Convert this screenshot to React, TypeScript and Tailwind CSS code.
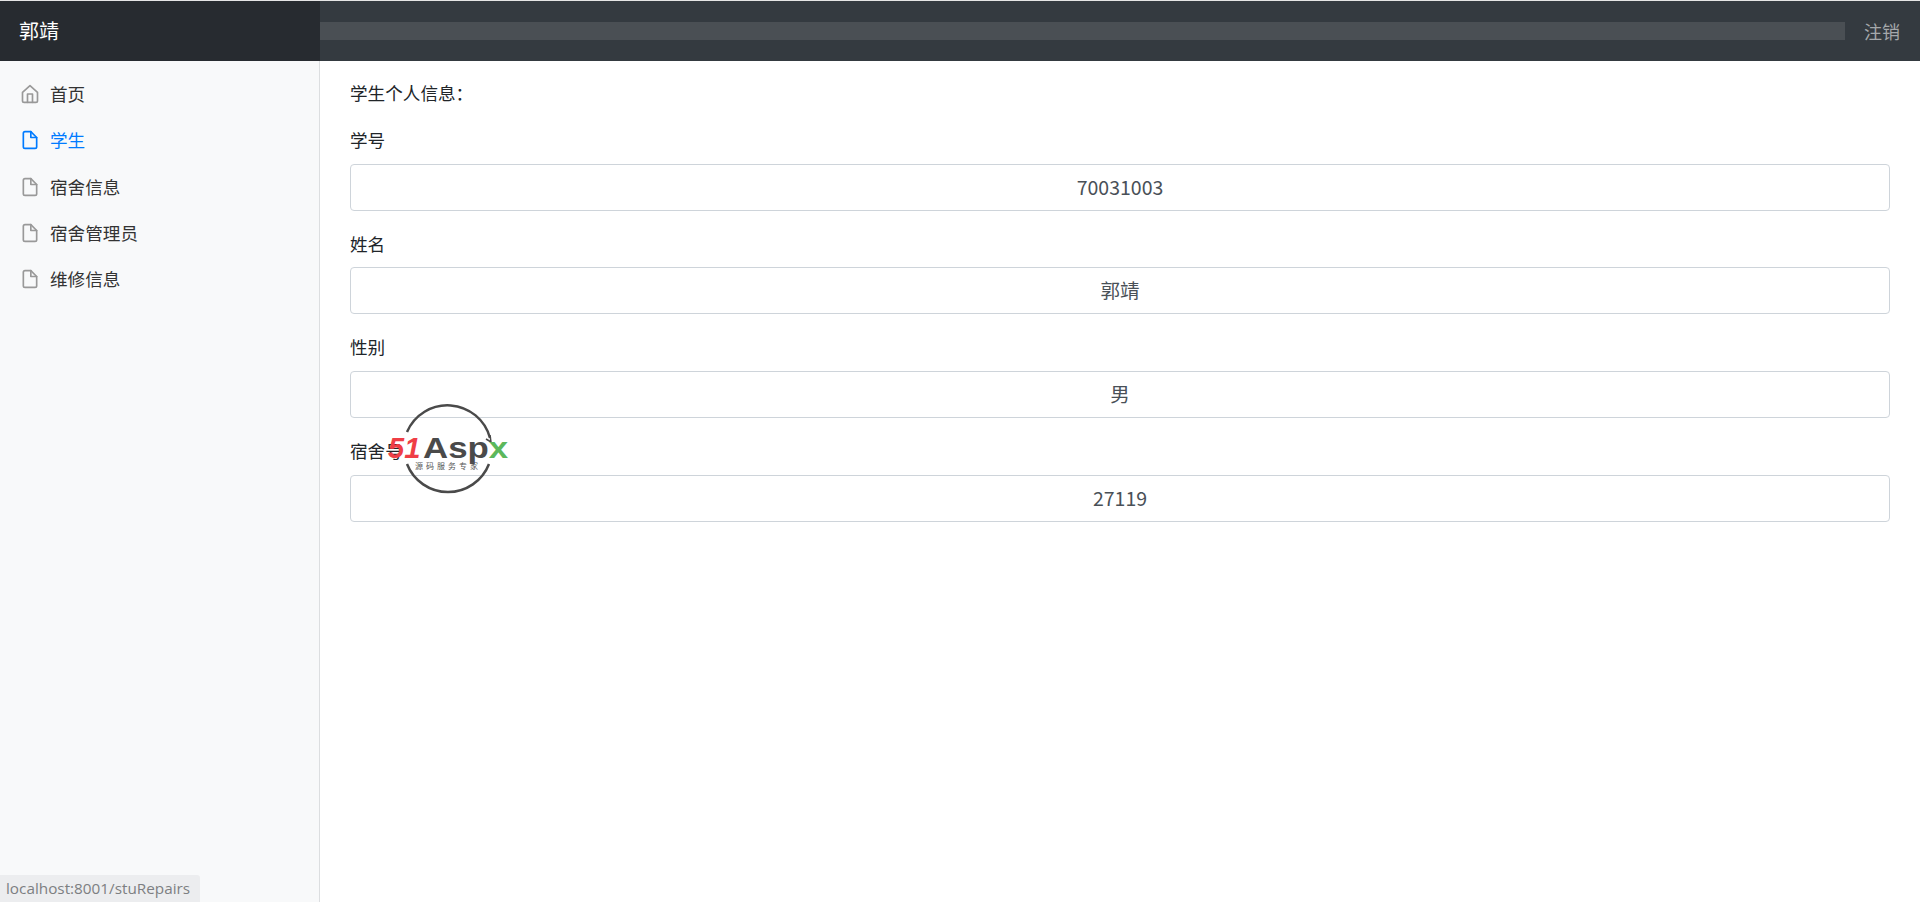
const font = "[font-family:'Noto_Sans_CJK_SC','Liberation_Sans',sans-serif]";

function HomeIcon() {
  return (
    <svg className="w-[20px] h-[20px]" viewBox="0 0 24 24" fill="none" stroke="currentColor" strokeWidth="2" strokeLinecap="round" strokeLinejoin="round">
      <path d="M3 10l9-8 9 8v10a2 2 0 0 1-2 2H5a2 2 0 0 1-2-2z" />
      <path d="M9 22V12h6v10" />
    </svg>
  );
}

function FileIcon() {
  return (
    <svg className="w-[20px] h-[20px]" viewBox="0 0 24 24" fill="none" stroke="currentColor" strokeWidth="2" strokeLinecap="round" strokeLinejoin="round">
      <path d="M13 2H6a2 2 0 0 0-2 2v16a2 2 0 0 0 2 2h12a2 2 0 0 0 2-2V9z" />
      <path d="M13 2v7h7" />
    </svg>
  );
}

function NavItem({ label, active, home }: { label: string; active?: boolean; home?: boolean }) {
  return (
    <a href="#" className={`flex items-center h-[46.3px] pl-[20px] text-[17.6px] ${active ? "text-[#007bff]" : "text-[#333]"}`}>
      <span className={`mr-[10px] ${active ? "text-[#007bff]" : "text-[#999]"}`}>
        {home ? <HomeIcon /> : <FileIcon />}
      </span>
      {label}
    </a>
  );
}

function Field({ label, value }: { label: string; value: string }) {
  return (
    <div className="mb-[16px]">
      <label className="block h-[32.7px] mb-[8px] leading-[33px] text-[#212529]">{label}</label>
      <input readOnly value={value} className={`${font} block w-full h-[47px] pb-[2px] border border-[#ced4da] rounded-[4px] bg-white text-center text-[#495057] text-[19.5px]`} />
    </div>
  );
}

function Watermark() {
  return (
    <div className="absolute left-[386px] top-[402px] w-[126px] h-[92px]">
      <svg className="absolute left-[16px] top-0 w-[92px] h-[92px]" viewBox="0 0 92 92" fill="none" stroke="#4a4a4a" strokeWidth="2.5">
        <path d="M5 30A44 44 0 0 1 88 36" />
        <path d="M88 33l1 7-5-3" strokeWidth="1.5" />
        <path d="M87 62A44 44 0 0 1 5 62" />
      </svg>
      <div className="absolute left-[2px] top-[31px] flex items-baseline leading-[30px] text-[29px] font-bold whitespace-nowrap font-['Liberation_Sans',sans-serif]">
        <span className="italic text-[#ef3e46]">51</span>
        <span className="inline-block ml-[3px] origin-left scale-x-120 text-[#4a4a4a]">
          Asp<span className="text-[#5cb85c]">x</span>
        </span>
      </div>
      <div className={`${font} absolute left-[29px] top-[59px] text-[8px] leading-[10px] tracking-[3px] text-[#555] whitespace-nowrap`}>源码服务专家</div>
    </div>
  );
}

export default function App() {
  return (
    <div className={`${font} relative w-[1920px] h-[902px] overflow-hidden bg-white text-[17.6px]`}>
      <nav className="flex items-center h-[61px] bg-[#343a40] border-t border-[#e5e5e5]">
        <div className="w-[320px] h-full flex items-center pl-[19px] bg-[#272b30] text-white text-[20px]">郭靖</div>
        <div className="flex-1 h-[18px] bg-[#4a4f54]" />
        <a href="#" className="w-[75px] pl-[19px] text-[#a5a8ab] text-[18px]">注销</a>
      </nav>
      <div className="flex h-[841px]">
        <aside className="w-[320px] shrink-0 pt-[10px] bg-[#f8f9fa] border-r border-[#dcdee0]">
          <NavItem home label="首页" />
          <NavItem active label="学生" />
          <NavItem label="宿舍信息" />
          <NavItem label="宿舍管理员" />
          <NavItem label="维修信息" />
        </aside>
        <main className="flex-1 pl-[30px] pr-[30px] pt-[16px] text-[#212529]">
          <p className="h-[32px] leading-[32px] mb-[14px]">学生个人信息：</p>
          <Field label="学号" value="70031003" />
          <Field label="姓名" value="郭靖" />
          <Field label="性别" value="男" />
          <Field label="宿舍号" value="27119" />
        </main>
      </div>
      <Watermark />
      <div className="absolute left-0 bottom-0 w-[200px] h-[27px] pl-[6px] leading-[27px] bg-[#ecedef] rounded-tr-[3px] text-[#7d7f82] text-[15.3px] font-['Open_Sans',sans-serif]">localhost:8001/stuRepairs</div>
    </div>
  );
}
